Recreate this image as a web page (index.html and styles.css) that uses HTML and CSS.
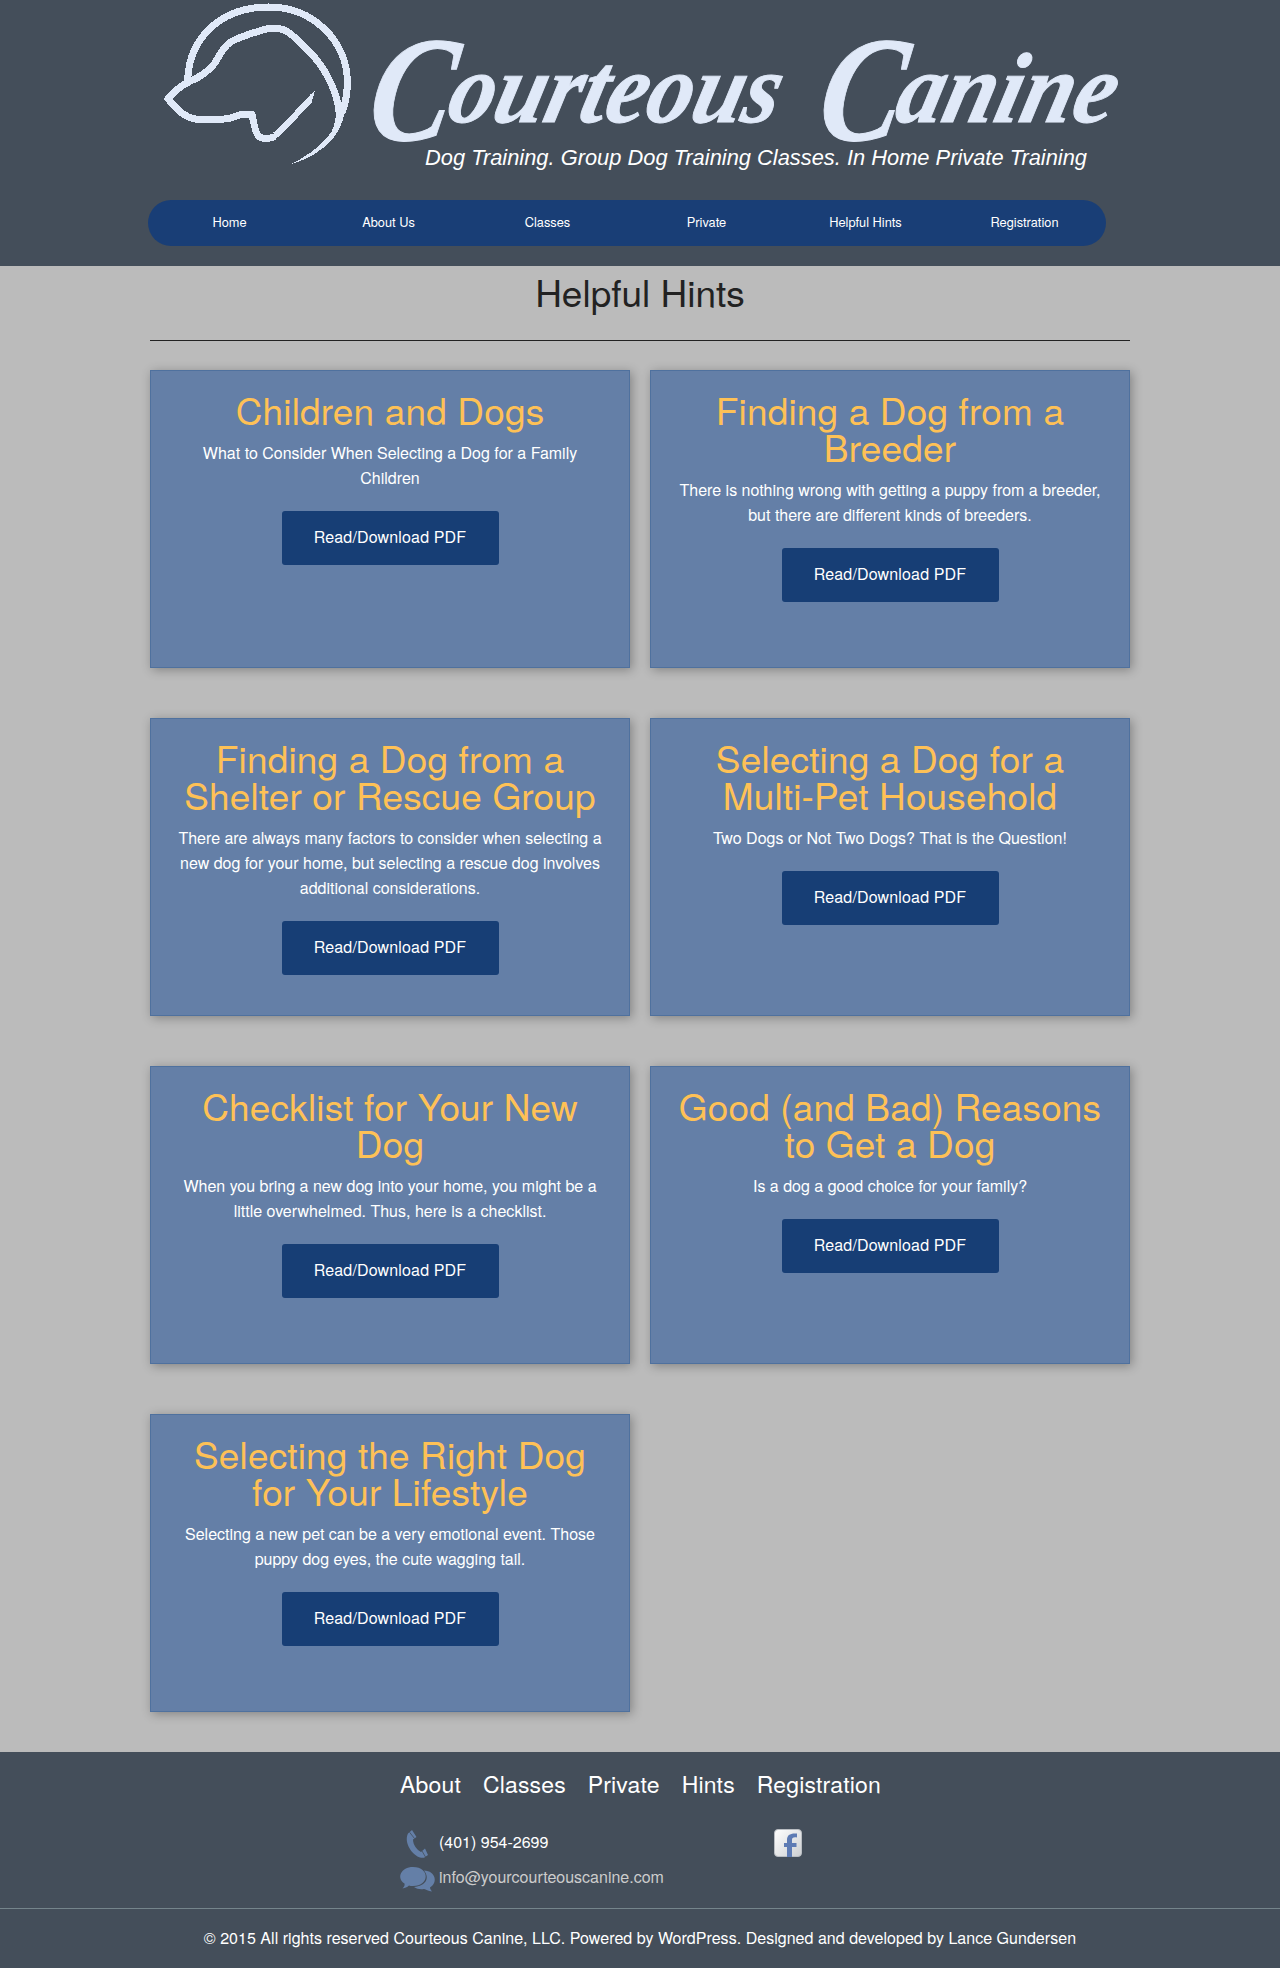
FILE: index.html
```html
<!DOCTYPE html>
<html lang="en">
<head>
<meta charset="utf-8">
<title>Helpful Hints - Courteous Canine</title>
<link rel="stylesheet" href="styles.css">
</head>
<body>
<header class="site-header">
  <svg class="logo" width="980" height="190" viewBox="150 0 980 190" role="img" aria-label="Courteous Canine">
    <g class="logo-dog" transform="translate(140 0) scale(.33333)">
      <path class="stroke" d="M143 240C148 110 245 21 387 21C520 21 622 125 622 245C622 275 618 305 607 335"/>
      <path class="stroke" d="M84 296C105 270 125 256 150 244C185 229 207 212 224 190C240 165 247 142 272 126C300 110 340 98 375 88C405 80 427 83 450 100C495 138 535 178 560 224C584 268 600 310 598 355"/>
      <path class="stroke" d="M84 296C104 320 128 352 170 358C205 362 237 359 265 356C285 352 297 342 315 343H336C341 365 343 388 354 407C366 419 391 417 405 409"/>
      <path d="M70 296L84 284L98 296L84 309Z"/>
      <path d="M400 398C432 373 466 330 512 283L525 272L514 310C478 343 439 394 405 419Z"/>
      <path d="M588 330L618 318C613 350 604 382 582 412C550 451 506 477 453 493C497 470 534 445 562 413C583 389 588 360 588 330Z"/>
    </g>
    <g class="logo-name">
      <text class="initial" transform="translate(364 140) skewX(-10)" textLength="82" lengthAdjust="spacingAndGlyphs">C</text>
      <text transform="translate(444 122) skewX(-14)" textLength="330" lengthAdjust="spacingAndGlyphs">ourteous</text>
      <text class="initial" transform="translate(814 140) skewX(-10)" textLength="82" lengthAdjust="spacingAndGlyphs">C</text>
      <text transform="translate(892 122) skewX(-14)" textLength="218" lengthAdjust="spacingAndGlyphs">anine</text>
    </g>
    <text class="logo-tagline" x="425" y="165" textLength="662" lengthAdjust="spacingAndGlyphs">Dog Training. Group Dog Training Classes. In Home Private Training</text>
  </svg>
  <nav class="main-nav">
    <a>Home</a><a>About Us</a><a>Classes</a><a>Private</a><a>Helpful Hints</a><a>Registration</a>
  </nav>
</header>

<main class="content">
  <h1 class="page-title">Helpful Hints</h1>
  <div class="cards">
    <article class="card">
      <h2>Children and Dogs</h2>
      <p>What to Consider When Selecting a Dog for a Family Children</p>
      <a class="button">Read/Download PDF</a>
    </article>
    <article class="card">
      <h2>Finding a Dog from a Breeder</h2>
      <p>There is nothing wrong with getting a puppy from a breeder, but there are different kinds of breeders.</p>
      <a class="button">Read/Download PDF</a>
    </article>
    <article class="card">
      <h2>Finding a Dog from a Shelter or Rescue Group</h2>
      <p>There are always many factors to consider when selecting a new dog for your home, but selecting a rescue dog involves additional considerations.</p>
      <a class="button">Read/Download PDF</a>
    </article>
    <article class="card">
      <h2>Selecting a Dog for a Multi-Pet Household</h2>
      <p>Two Dogs or Not Two Dogs? That is the Question!</p>
      <a class="button">Read/Download PDF</a>
    </article>
    <article class="card">
      <h2>Checklist for Your New Dog</h2>
      <p>When you bring a new dog into your home, you might be a little overwhelmed. Thus, here is a checklist.</p>
      <a class="button">Read/Download PDF</a>
    </article>
    <article class="card">
      <h2>Good (and Bad) Reasons to Get a Dog</h2>
      <p>Is a dog a good choice for your family?</p>
      <a class="button">Read/Download PDF</a>
    </article>
    <article class="card">
      <h2>Selecting the Right Dog for Your Lifestyle</h2>
      <p>Selecting a new pet can be a very emotional event. Those puppy dog eyes, the cute wagging tail.</p>
      <a class="button">Read/Download PDF</a>
    </article>
  </div>
</main>

<footer class="site-footer">
  <nav class="footer-nav">
    <a>About</a><a>Classes</a><a>Private</a><a>Hints</a><a>Registration</a>
  </nav>
  <div class="footer-info">
    <div class="contact">
      <div class="contact-row">
        <svg width="36" height="35" viewBox="0 0 36 35"><path d="M8 4.500L12 1L16.500 8L13 10.500C13 16 17 21 21 23L25 19.500L28 26L24 28.800C14 30 3 14 8 4.500Z"/><path class="gap" d="M9.500 3.200L14.500 9.500M22 22L25.500 28"/></svg>
        <span>(401) 954-2699</span>
      </div>
      <div class="contact-row email">
        <svg width="36" height="35" viewBox="0 0 36 35"><path d="M24 6.500C36 7 38 19 30 23.500C30 25 31 26 32 27.500C28 27 26 25.500 24 25C20 25.500 17 25 14 23C26 22 30 14 24 6.500Z"/><path d="M13 3C30 3 30 22 13 22C11 22 10 22 9 21.500C7 23.500 5 24 2.500 24.500C4 23 5 21.500 4.500 19.500C-4 14 1 3 13 3Z"/></svg>
        <span>info@yourcourteouscanine.com</span>
      </div>
    </div>
    <svg class="facebook" width="28" height="28" viewBox="0 0 28 28">
      <defs><linearGradient id="tile" x1="0" y1="0" x2="1" y2="1"><stop offset="0" stop-color="#fff"/><stop offset="1" stop-color="#cdcfd2"/></linearGradient></defs>
      <rect x=".5" y=".5" width="27" height="27" rx="3.500" fill="url(#tile)" stroke="#b9bdc2"/>
      <path d="M13 28V18H10V14H13V11C13 6 16 4 23 4.500V8.500C19 8 18 9 18 11V14H22.500V18H18V28Z" fill="#5e7bb4"/>
    </svg>
  </div>
  <div class="copyright">© 2015 All rights reserved Courteous Canine, LLC. Powered by WordPress. Designed and developed by Lance Gundersen</div>
</footer>
</body>
</html>
```
FILE: styles.css
```css
* { box-sizing: border-box; }
body {
  margin: 0;
  background: #fff;
  color: #222;
  font: 16px/25px "Nimbus Sans", "Nimbus Sans L", "TeX Gyre Heros", "Liberation Sans", Arial, sans-serif;
}
.site-header { height: 266px; background: #444e5a; }
.logo { display: block; margin-left: 150px; overflow: visible; fill: #e0e9f8; }
.logo-dog { shape-rendering: crispEdges; }
.logo-dog .stroke { fill: none; stroke: #e0e9f8; stroke-width: 21; stroke-linejoin: round; }
.logo-name {
  font: italic bold 100px "Liberation Serif", serif;
  stroke: #e0e9f8;
  stroke-width: 1;
}
.logo-name .initial { font-size: 150px; }
.logo-tagline { font: italic 22px "Liberation Sans", Arial, sans-serif; fill: #fff; }
.main-nav {
  display: flex;
  width: 958px;
  height: 46px;
  margin: 10px 0 0 148px;
  padding: 0 2px;
  border-radius: 23px;
  background: #193e76;
  color: #fff;
  font-size: 12.8px;
  line-height: 44px;
  text-align: center;
}
.main-nav a { flex: 1; }
.content { height: 1486px; padding: 0 150px; background: #bbb; }
.page-title {
  height: 75px;
  margin: 0;
  padding-top: 7px;
  border-bottom: 1px solid #222;
  font-weight: normal;
  font-size: 37px;
  line-height: 37px;
  text-align: center;
}
.cards {
  display: grid;
  grid-template-columns: 480px 480px;
  grid-auto-rows: 298px;
  gap: 50px 20px;
  padding-top: 29px;
}
.card {
  padding: 20px 24px;
  border: 1px solid #4f719e;
  background: #647fa7;
  box-shadow: 2px 2px 10px rgba(0, 0, 0, .3);
  color: #fff;
  text-align: center;
}
.card h2 {
  margin: 0 0 12px;
  color: #fec156;
  font-weight: normal;
  font-size: 37px;
  letter-spacing: .15px;
  line-height: 37px;
}
.card p { margin: 0 0 21px; }
.button {
  display: inline-block;
  width: 217px;
  height: 54px;
  border-radius: 3px;
  background: #173e75;
  letter-spacing: .15px;
  line-height: 52px;
}
.site-footer { height: 216px; background: #444e5a; color: #fff; }
.footer-nav {
  display: flex;
  gap: 22px;
  height: 50px;
  padding: 16px 0 0 400px;
  font-size: 23px;
  letter-spacing: .15px;
  line-height: 32px;
}
.footer-info { display: flex; height: 106px; padding: 27px 0 0 400px; }
.contact { width: 374px; }
.contact-row { display: flex; gap: 3px; height: 35px; line-height: 25px; }
.contact-row svg { fill: #647fa7; overflow: visible; }
.contact-row .gap { fill: none; stroke: #444e5a; stroke-width: .8; }
.email { color: #ccc; }
.facebook { display: block; }
.copyright {
  height: 60px;
  border-top: 1px solid #75848b;
  letter-spacing: .03px;
  line-height: 57px;
  text-align: center;
}
```
